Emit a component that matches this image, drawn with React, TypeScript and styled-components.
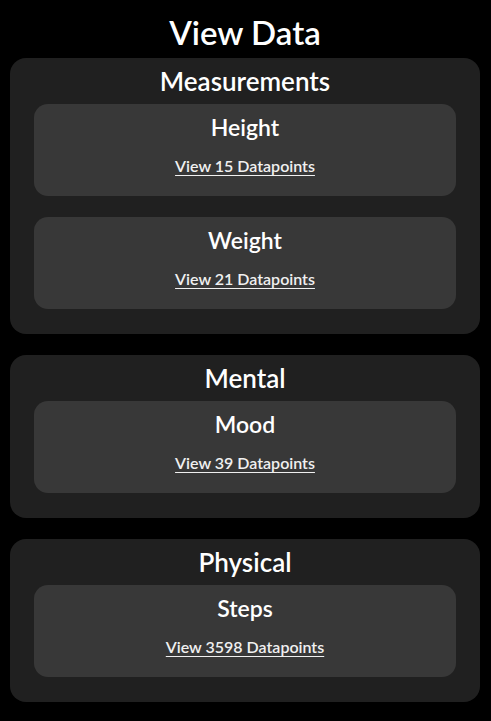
import React from "react";
import styled, { createGlobalStyle } from "styled-components";

const GlobalStyle = createGlobalStyle`
  body {
    margin: 0;
    background: #000;
    font-family: Lato, "Noto Sans", sans-serif;
    color: #fff;
  }
`;

type Metric = { name: string; count: number };
type Section = { title: string; metrics: Metric[] };

const sections: Section[] = [
  {
    title: "Measurements",
    metrics: [
      { name: "Height", count: 15 },
      { name: "Weight", count: 21 },
    ],
  },
  { title: "Mental", metrics: [{ name: "Mood", count: 39 }] },
  { title: "Physical", metrics: [{ name: "Steps", count: 3598 }] },
];

const App = () => {
  return (
    <>
      <GlobalStyle />
      <PageStyled>
        <PageTitleStyled>View Data</PageTitleStyled>
        <SectionListStyled>
          {sections.map((section) => (
            <SectionCardStyled key={section.title}>
              <SectionTitleStyled>{section.title}</SectionTitleStyled>
              <MetricListStyled>
                {section.metrics.map((metric) => (
                  <MetricCardStyled key={metric.name}>
                    <MetricTitleStyled>{metric.name}</MetricTitleStyled>
                    <MetricLinkStyled href="#">
                      {`View ${metric.count} Datapoints`}
                    </MetricLinkStyled>
                  </MetricCardStyled>
                ))}
              </MetricListStyled>
            </SectionCardStyled>
          ))}
        </SectionListStyled>
      </PageStyled>
    </>
  );
};

const PageStyled = styled.div`
  padding: 12px 11px 19px 10px;
  display: flex;
  flex-direction: column;
`;

const PageTitleStyled = styled.h1`
  margin: 0 0 6px;
  font-size: 33px;
  line-height: 40px;
  font-weight: 600;
  text-align: center;
`;

const SectionListStyled = styled.div`
  display: flex;
  flex-direction: column;
  gap: 21px;
`;

const SectionCardStyled = styled.div`
  background: #202020;
  border-radius: 16px;
  padding: 8px 24px 25px;
`;

const SectionTitleStyled = styled.h2`
  margin: 0 0 8px;
  font-size: 26px;
  line-height: 30px;
  font-weight: 600;
  text-align: center;
`;

const MetricListStyled = styled.div`
  display: flex;
  flex-direction: column;
  gap: 21px;
`;

const MetricCardStyled = styled.div`
  background: #383838;
  border-radius: 14px;
  padding: 10px 10px 21px;
  display: flex;
  flex-direction: column;
  align-items: center;
`;

const MetricTitleStyled = styled.h3`
  margin: 0 0 17px;
  font-size: 23px;
  line-height: 26px;
  font-weight: 600;
`;

const MetricLinkStyled = styled.a`
  font-size: 16px;
  line-height: 18px;
  font-weight: 600;
  color: #f0f0f0;
  text-decoration: underline;
  text-underline-offset: 3px;
`;

export default App;
